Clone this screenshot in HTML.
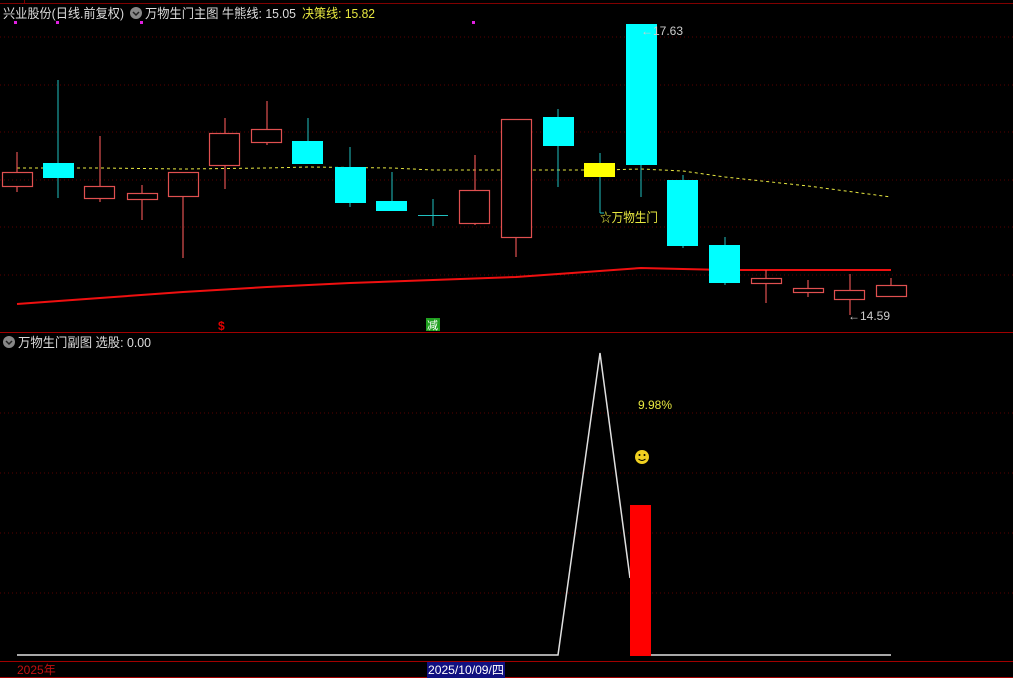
<!DOCTYPE html>
<html><head><meta charset="utf-8"><style>
html,body{margin:0;padding:0;background:#000;width:1013px;height:678px;overflow:hidden;font-family:"Liberation Sans","Noto Sans CJK SC",sans-serif;}
svg{position:absolute;left:0;top:0}
</style></head><body>
<svg width="1013" height="678" viewBox="0 0 1013 678" xmlns="http://www.w3.org/2000/svg" font-family="Liberation Sans, Noto Sans CJK SC, sans-serif">
<rect width="1013" height="678" fill="#000"/>
<line x1="0" y1="3.5" x2="1013" y2="3.5" stroke="#800000"/>
<line x1="24.5" y1="0" x2="24.5" y2="3" stroke="#800000"/>
<g stroke="#5a0000" stroke-dasharray="1,3">
<line x1="0" y1="37" x2="1013" y2="37"/><line x1="0" y1="85" x2="1013" y2="85"/>
<line x1="0" y1="132" x2="1013" y2="132"/><line x1="0" y1="180" x2="1013" y2="180"/>
<line x1="0" y1="227" x2="1013" y2="227"/><line x1="0" y1="275" x2="1013" y2="275"/>
<line x1="0" y1="413" x2="1013" y2="413"/><line x1="0" y1="473" x2="1013" y2="473"/>
<line x1="0" y1="533" x2="1013" y2="533"/><line x1="0" y1="593" x2="1013" y2="593"/>
</g>
<line x1="0" y1="332.5" x2="1013" y2="332.5" stroke="#a00000"/>
<line x1="0" y1="661.5" x2="1013" y2="661.5" stroke="#a00000"/>
<line x1="0" y1="677.5" x2="1013" y2="677.5" stroke="#a00000"/>
<g fill="#e020e0"><rect x="14" y="21" width="3" height="3"/><rect x="56" y="21" width="3" height="3"/><rect x="140" y="21" width="3" height="3"/><rect x="472" y="21" width="3" height="3"/></g>
<text x="3" y="18" fill="#ddd" font-size="13" textLength="121" lengthAdjust="spacingAndGlyphs">兴业股份(日线.前复权)</text>
<circle cx="136" cy="13" r="6" fill="#888"/><path d="M133 12l3 3 3-3" stroke="#222" stroke-width="1.5" fill="none"/>
<text x="145" y="18" fill="#ddd" font-size="13" textLength="151" lengthAdjust="spacingAndGlyphs">万物生门主图 牛熊线: 15.05</text>
<text x="302" y="18" fill="#e8e840" font-size="13" textLength="73" lengthAdjust="spacingAndGlyphs">决策线: 15.82</text>
<polyline points="17,304 100,298 183,292 267,287 350,283 433,280 516,277 558,274 641,268 683,269 725,270 891,270" stroke="#f01010" stroke-width="2" fill="none"/>
<polyline points="17,168 100,168 183,169 267,168 308,167 392,168 433,170 516,170 600,170 641,169 683,171 725,177 808,186 891,197" stroke="#e8e840" stroke-width="1" stroke-dasharray="3,3" fill="none"/>
<g stroke="#e05050" fill="none" stroke-width="1.2">
<line x1="17" y1="152" x2="17" y2="172"/><line x1="17" y1="187" x2="17" y2="192"/><rect x="2.5" y="172.5" width="30" height="14"/>
<line x1="100" y1="136" x2="100" y2="186"/><line x1="100" y1="198" x2="100" y2="202"/><rect x="84.5" y="186.5" width="30" height="12"/>
<line x1="142" y1="185" x2="142" y2="220"/><rect x="127.5" y="193.5" width="30" height="6" fill="#000"/>
<line x1="183" y1="197" x2="183" y2="258"/><rect x="168.5" y="172.5" width="30" height="24"/>
<line x1="225" y1="118" x2="225" y2="189"/><rect x="209.5" y="133.5" width="30" height="32" fill="#000"/>
<line x1="267" y1="101" x2="267" y2="145"/><rect x="251.5" y="129.5" width="30" height="13" fill="#000"/>
<line x1="475" y1="155" x2="475" y2="225"/><rect x="459.5" y="190.5" width="30" height="33" fill="#000"/>
<line x1="516" y1="237" x2="516" y2="257"/><rect x="501.5" y="119.5" width="30" height="118" fill="#000"/>
<line x1="766" y1="270" x2="766" y2="303"/><rect x="751.5" y="278.5" width="30" height="5" fill="#000"/>
<line x1="808" y1="280" x2="808" y2="297"/><rect x="793.5" y="288.5" width="30" height="4" fill="#000"/>
<line x1="850" y1="274" x2="850" y2="315"/><rect x="834.5" y="290.5" width="30" height="9" fill="#000"/>
<line x1="891" y1="278" x2="891" y2="285"/><rect x="876.5" y="285.5" width="30" height="11"/>
</g>
<g stroke="#20c0c0" stroke-width="1">
<line x1="58" y1="80" x2="58" y2="198"/><line x1="308" y1="118" x2="308" y2="141"/>
<line x1="350" y1="147" x2="350" y2="207"/><line x1="392" y1="172" x2="392" y2="201"/>
<line x1="433" y1="199" x2="433" y2="226"/><line x1="418" y1="215.5" x2="448" y2="215.5"/>
<line x1="558" y1="109" x2="558" y2="187"/><line x1="600" y1="153" x2="600" y2="213"/><line x1="600" y1="213" x2="604" y2="213"/>
<line x1="641" y1="160" x2="641" y2="197"/><line x1="683" y1="175" x2="683" y2="248"/><line x1="725" y1="237" x2="725" y2="285"/>
</g>
<g fill="#00ffff">
<rect x="43" y="163" width="31" height="15"/><rect x="292" y="141" width="31" height="23"/>
<rect x="335" y="167" width="31" height="36"/><rect x="376" y="201" width="31" height="10"/>
<rect x="543" y="117" width="31" height="29"/><rect x="626" y="24" width="31" height="141"/>
<rect x="667" y="180" width="31" height="66"/><rect x="709" y="245" width="31" height="38"/>
</g>
<rect x="584" y="163" width="31" height="14" fill="#ffff00"/>
<text x="600" y="222" fill="#e8e840" font-size="13" textLength="58" lengthAdjust="spacingAndGlyphs">☆万物生门</text>
<text x="641" y="35" fill="#ccc" font-size="12">←17.63</text>
<text x="848" y="320" fill="#ccc" font-size="12">←14.59</text>
<text x="218" y="330" fill="#e00000" font-size="12" font-weight="bold">$</text>
<rect x="426" y="318" width="14" height="13" fill="#20a020"/>
<text x="427" y="329" fill="#fff" font-size="11">减</text>
<circle cx="9" cy="342" r="6" fill="#888"/><path d="M6 341l3 3 3-3" stroke="#222" stroke-width="1.5" fill="none"/>
<text x="18" y="347" fill="#ddd" font-size="13" textLength="133" lengthAdjust="spacingAndGlyphs">万物生门副图 选股: 0.00</text>
<polyline points="17,655 558,655 600,353 630,578" stroke="#e0e0e0" stroke-width="1.5" fill="none"/>
<line x1="651" y1="655" x2="891" y2="655" stroke="#e0e0e0" stroke-width="1.5"/>
<rect x="630" y="505" width="21" height="151" fill="#ff0000"/>
<text x="638" y="409" fill="#e8e840" font-size="12">9.98%</text>
<circle cx="642" cy="457" r="7" fill="#f0d020"/><circle cx="639.5" cy="455" r="1" fill="#000"/><circle cx="644.5" cy="455" r="1" fill="#000"/><path d="M638.5 459q3.5 3 7 0" stroke="#000" fill="none"/>
<text x="17" y="674" fill="#c01010" font-size="12">2025年</text>
<rect x="427" y="662" width="78" height="16" fill="#101080"/>
<text x="428" y="674" fill="#fff" font-size="12" textLength="76" lengthAdjust="spacingAndGlyphs">2025/10/09/四</text>
</svg>
</body></html>
